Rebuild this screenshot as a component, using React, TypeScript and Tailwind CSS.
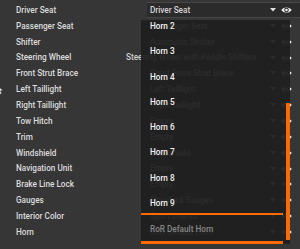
import React from "react"

type Row = {
  label: string
  value: string
  wide?: boolean
}

const ROWS: Row[] = [
  { label: "Driver Seat", value: "Driver Seat" },
  { label: "Passenger Seat", value: "Passenger Seat" },
  { label: "Shifter", value: "Automatic Shifter" },
  { label: "Steering Wheel", value: "Steering Wheel with Paddle Shifters", wide: true },
  { label: "Front Strut Brace", value: "Sport Front Strut Brace" },
  { label: "Left Taillight", value: "Left Taillight" },
  { label: "Right Taillight", value: "Right Taillight" },
  { label: "Tow Hitch", value: "Empty" },
  { label: "Trim", value: "Empty" },
  { label: "Windshield", value: "Windshield" },
  { label: "Navigation Unit", value: "Empty" },
  { label: "Brake Line Lock", value: "Empty" },
  { label: "Gauges", value: "Standard Gauges" },
  { label: "Interior Color", value: "Sport Interior" },
  { label: "Horn", value: "RoR Default Horn" },
]

const HORNS = ["Horn 2", "Horn 3", "Horn 4", "Horn 5", "Horn 6", "Horn 7", "Horn 8", "Horn 9"]

const Eye = () => (
  <svg width="11" height="8" viewBox="0 0 11 8" className="shrink-0">
    <path d="M0.3 4 C2 0.6 9 0.6 10.7 4 C9 7.4 2 7.4 0.3 4 Z" fill="#ececec" />
    <circle cx="5.5" cy="4" r="2.3" fill="#2a2a2a" />
    <circle cx="5.5" cy="4" r="1.3" fill="#ececec" />
  </svg>
)

const Caret = () => (
  <svg width="6" height="4" viewBox="0 0 6 4" className="shrink-0">
    <path d="M0 0 H6 L3 3.5 Z" fill="#e0e0e0" />
  </svg>
)

const PartRow = ({ row, index }: { row: Row; index: number }) => {
  const selected = index === 0

  return (
    <div className="flex h-[15.86px] items-center">
      <div className="w-[147px] shrink-0 whitespace-nowrap pl-4 text-[#dcdcdc]">{row.label}</div>
      <div
        className={
          selected
            ? "flex h-full flex-1 items-center border-t border-b border-[#474747] bg-[#2b2b2b] pl-[3px] pr-[8px]"
            : "flex h-full flex-1 items-center pl-[3px] pr-[8px]"
        }
      >
        <span
          className={
            row.wide
              ? "-ml-[24px] flex-1 whitespace-nowrap text-[#cfcfcf]"
              : "flex-1 whitespace-nowrap text-[#d4d4d4]"
          }
        >
          {row.value}
        </span>
        <span className="mr-[5px]">
          <Caret />
        </span>
        <Eye />
      </div>
    </div>
  )
}

const App = () => {
  return (
    <div
      className="relative h-[249px] w-[300px] overflow-hidden bg-[#363636] text-[8.2px] font-medium"
      style={{ fontFamily: "Roboto, 'Liberation Sans', sans-serif" }}
    >
      <div className="flex flex-col pt-[2px]">
        {ROWS.map((row, i) => (
          <PartRow key={row.label} row={row} index={i} />
        ))}
      </div>

      {/* mouse cursor */}
      <svg width="8" height="10" viewBox="0 0 8 10" className="absolute left-[-3px] top-[85px]">
        <path d="M0 0 L0 8 L2 6.3 L3.4 9.4 L4.8 8.8 L3.5 5.8 L6.2 5.8 Z" fill="#f2f2f2" stroke="#222" strokeWidth="0.5" />
      </svg>

      {/* open dropdown */}
      <div className="absolute left-[141px] top-[20px] flex h-[224px] w-[149px] overflow-hidden bg-[rgba(30,30,30,0.93)]">
        <div className="flex w-[145px] flex-col -mt-[9.4px]">
          {HORNS.map((horn) => (
            <div key={horn} className="h-[25.3px] shrink-0 pl-[9px] pt-[9.4px] leading-[12px] text-[#f2f2f2]">
              {horn}
            </div>
          ))}
          <div className="mr-[3px] h-[31px] shrink-0 border-t-2 border-b-[3px] border-[#ff6a00] pl-[9px] pt-[8px] leading-[12px] text-[#858585]">
            RoR Default Horn
          </div>
        </div>
        <div className="w-[4px] shrink-0">
          <div className="mt-[83px] h-[137px] bg-[#ff6a00]" />
        </div>
      </div>
    </div>
  )
}

export default App
